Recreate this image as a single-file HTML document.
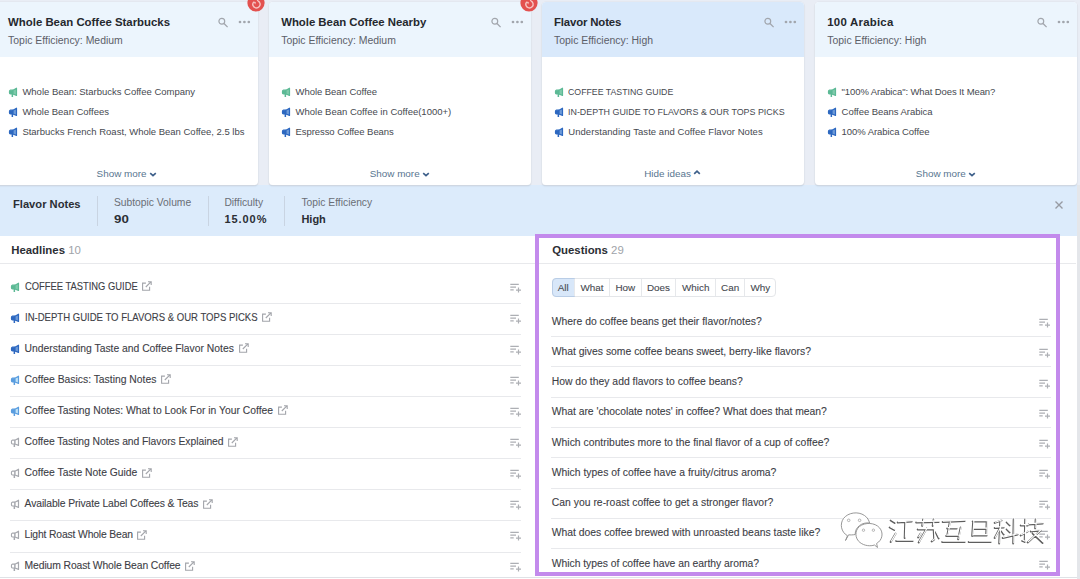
<!DOCTYPE html>
<html><head><meta charset="utf-8">
<style>
*{margin:0;padding:0;box-sizing:border-box}
html,body{width:1080px;height:579px;overflow:hidden;background:#fff;font-family:"Liberation Sans",sans-serif;color:#333}
.abs{position:absolute}
.t{position:absolute;line-height:1;white-space:nowrap}
#top{position:absolute;left:0;top:0;width:1080px;height:236px;background:#e9edf5}
.card{position:absolute;top:2.2px;width:262px;height:182.8px;background:#fff;border-radius:4px;box-shadow:0 0 0 0.6px #dfe4ec,0 1px 1.5px rgba(0,0,0,.17);overflow:hidden}
.card .hd{position:absolute;left:0;top:0;width:100%;height:54.8px;background:#ecf5fd}
.card.sel .hd{background:#d9e9fb}
.ttl{font-weight:bold;color:#25282e}
.sub{color:#5c6069}
.itm{color:#46494f}
.more{color:#58758f}
#bar{position:absolute;left:0;top:185px;width:1077px;height:51px;background:#dcebfb}
.lbl{color:#6a6e76}
.val{font-weight:bold;color:#2b2e34}
.hl{color:#3d4046;-webkit-text-stroke:0.1px #3d4046}
.sep{position:absolute;height:1px;background:#e8e9ec}
</style></head><body>
<div id="top"></div>
<div id="bar"></div>
<div class="abs" style="left:1076.7px;top:185px;width:3.3px;height:394px;background:#e4e6ea"></div>
<div class="card" style="left:-4.4px"><div class="hd"></div></div>
<div class="card" style="left:268.7px"><div class="hd"></div></div>
<div class="card sel" style="left:541.5px"><div class="hd"></div></div>
<div class="card" style="left:814.8px"><div class="hd"></div></div>
<div class="t ttl" style="left:8.10px;top:16.55px;font-size:11.4px;letter-spacing:-0.005px;">Whole Bean Coffee Starbucks</div>
<div class="t sub" style="left:8.10px;top:35.95px;font-size:10.45px;">Topic Efficiency: Medium</div>
<svg class="abs" style="left:217.10px;top:15.60px" width="12" height="12" viewBox="0 0 12 12"><circle cx="4.8" cy="5.3" r="2.9" fill="none" stroke="#a2a6ad" stroke-width="1.2"/><path d="M7 7.5 L10.6 11.1" stroke="#a2a6ad" stroke-width="1.3"/></svg>
<svg class="abs" style="left:237.60px;top:20.10px" width="13" height="4" viewBox="0 0 13 4"><circle cx="2" cy="2" r="1.35" fill="#a2a6ad"/><circle cx="6.4" cy="2" r="1.35" fill="#a2a6ad"/><circle cx="10.8" cy="2" r="1.35" fill="#a2a6ad"/></svg>
<svg class="abs" style="left:8.20px;top:87.40px" width="10" height="11" viewBox="0 0 10 11"><path d="M2.4 3.2 H5.0 V7.0 H2.4 Q1.4 7.0 1.4 5.1 Q1.4 3.2 2.4 3.2 Z" fill="#5cb995" stroke="#5cb995" stroke-width="1.2" stroke-linejoin="round"/><path d="M5.0 3.2 L8.5 1.2 V8.4 L5.0 7.0 Z" fill="#7fcaab" stroke="#5cb995" stroke-width="1.2" stroke-linejoin="round"/><rect x="3.6" y="7.0" width="1.5" height="3.0" fill="#5cb995"/></svg>
<div class="t itm" style="left:22.40px;top:87.46px;font-size:9.5px;letter-spacing:-0.012px;">Whole Bean: Starbucks Coffee Company</div>
<svg class="abs" style="left:8.20px;top:107.40px" width="10" height="11" viewBox="0 0 10 11"><path d="M2.4 3.2 H5.0 V7.0 H2.4 Q1.4 7.0 1.4 5.1 Q1.4 3.2 2.4 3.2 Z" fill="#2d68c0" stroke="#2d68c0" stroke-width="1.2" stroke-linejoin="round"/><path d="M5.0 3.2 L8.5 1.2 V8.4 L5.0 7.0 Z" fill="#6e9bd8" stroke="#2d68c0" stroke-width="1.2" stroke-linejoin="round"/><rect x="3.6" y="7.0" width="1.5" height="3.0" fill="#2d68c0"/></svg>
<div class="t itm" style="left:22.40px;top:107.46px;font-size:9.5px;letter-spacing:-0.026px;">Whole Bean Coffees</div>
<svg class="abs" style="left:8.20px;top:127.40px" width="10" height="11" viewBox="0 0 10 11"><path d="M2.4 3.2 H5.0 V7.0 H2.4 Q1.4 7.0 1.4 5.1 Q1.4 3.2 2.4 3.2 Z" fill="#2d68c0" stroke="#2d68c0" stroke-width="1.2" stroke-linejoin="round"/><path d="M5.0 3.2 L8.5 1.2 V8.4 L5.0 7.0 Z" fill="#6e9bd8" stroke="#2d68c0" stroke-width="1.2" stroke-linejoin="round"/><rect x="3.6" y="7.0" width="1.5" height="3.0" fill="#2d68c0"/></svg>
<div class="t itm" style="left:22.40px;top:127.46px;font-size:9.5px;letter-spacing:-0.013px;">Starbucks French Roast, Whole Bean Coffee, 2.5 lbs</div>
<div class="t more" style="left:46.599999999999994px;width:160px;text-align:center;top:169.42px;font-size:9.9px">Show more<svg width="8" height="5" viewBox="0 0 8 5" style="margin-left:2px;vertical-align:0.6px"><path d="M1.2 1.2 L4 3.6 L6.8 1.2" fill="none" stroke="#3d5f8a" stroke-width="1.7"/></svg></div>
<svg class="abs" style="left:247.00px;top:-5.80px" width="18" height="18" viewBox="0 0 18 18"><circle cx="9" cy="9" r="8.6" fill="#e3514f"/><g transform="translate(0.7 1.4)"><path d="M10.2 5.6 C12.6 6.4 13.2 9.6 11.4 11.4 C9.6 13.2 6.4 12.8 5.4 10.4 C4.8 9 5.2 7.4 6.2 6.6" fill="none" stroke="#f6c4c2" stroke-width="1.4"/><path d="M5.6 6.2 L8.2 6.6 L7.6 9.2 Z" fill="#f6c4c2"/><path d="M9.2 1 C10.4 2.4 10.4 4 9.6 5.6" fill="none" stroke="#f6c4c2" stroke-width="1.2"/></g></svg>
<div class="t ttl" style="left:281.20px;top:16.55px;font-size:11.4px;letter-spacing:-0.024px;">Whole Bean Coffee Nearby</div>
<div class="t sub" style="left:281.20px;top:35.95px;font-size:10.45px;">Topic Efficiency: Medium</div>
<svg class="abs" style="left:490.20px;top:15.60px" width="12" height="12" viewBox="0 0 12 12"><circle cx="4.8" cy="5.3" r="2.9" fill="none" stroke="#a2a6ad" stroke-width="1.2"/><path d="M7 7.5 L10.6 11.1" stroke="#a2a6ad" stroke-width="1.3"/></svg>
<svg class="abs" style="left:510.70px;top:20.10px" width="13" height="4" viewBox="0 0 13 4"><circle cx="2" cy="2" r="1.35" fill="#a2a6ad"/><circle cx="6.4" cy="2" r="1.35" fill="#a2a6ad"/><circle cx="10.8" cy="2" r="1.35" fill="#a2a6ad"/></svg>
<svg class="abs" style="left:281.30px;top:87.40px" width="10" height="11" viewBox="0 0 10 11"><path d="M2.4 3.2 H5.0 V7.0 H2.4 Q1.4 7.0 1.4 5.1 Q1.4 3.2 2.4 3.2 Z" fill="#5cb995" stroke="#5cb995" stroke-width="1.2" stroke-linejoin="round"/><path d="M5.0 3.2 L8.5 1.2 V8.4 L5.0 7.0 Z" fill="#7fcaab" stroke="#5cb995" stroke-width="1.2" stroke-linejoin="round"/><rect x="3.6" y="7.0" width="1.5" height="3.0" fill="#5cb995"/></svg>
<div class="t itm" style="left:295.50px;top:87.46px;font-size:9.5px;letter-spacing:-0.042px;">Whole Bean Coffee</div>
<svg class="abs" style="left:281.30px;top:107.40px" width="10" height="11" viewBox="0 0 10 11"><path d="M2.4 3.2 H5.0 V7.0 H2.4 Q1.4 7.0 1.4 5.1 Q1.4 3.2 2.4 3.2 Z" fill="#2d68c0" stroke="#2d68c0" stroke-width="1.2" stroke-linejoin="round"/><path d="M5.0 3.2 L8.5 1.2 V8.4 L5.0 7.0 Z" fill="#6e9bd8" stroke="#2d68c0" stroke-width="1.2" stroke-linejoin="round"/><rect x="3.6" y="7.0" width="1.5" height="3.0" fill="#2d68c0"/></svg>
<div class="t itm" style="left:295.50px;top:107.46px;font-size:9.5px;letter-spacing:-0.000px;">Whole Bean Coffee in Coffee(1000+)</div>
<svg class="abs" style="left:281.30px;top:127.40px" width="10" height="11" viewBox="0 0 10 11"><path d="M2.4 3.2 H5.0 V7.0 H2.4 Q1.4 7.0 1.4 5.1 Q1.4 3.2 2.4 3.2 Z" fill="#2d68c0" stroke="#2d68c0" stroke-width="1.2" stroke-linejoin="round"/><path d="M5.0 3.2 L8.5 1.2 V8.4 L5.0 7.0 Z" fill="#6e9bd8" stroke="#2d68c0" stroke-width="1.2" stroke-linejoin="round"/><rect x="3.6" y="7.0" width="1.5" height="3.0" fill="#2d68c0"/></svg>
<div class="t itm" style="left:295.50px;top:127.46px;font-size:9.5px;letter-spacing:-0.068px;">Espresso Coffee Beans</div>
<div class="t more" style="left:319.7px;width:160px;text-align:center;top:169.42px;font-size:9.9px">Show more<svg width="8" height="5" viewBox="0 0 8 5" style="margin-left:2px;vertical-align:0.6px"><path d="M1.2 1.2 L4 3.6 L6.8 1.2" fill="none" stroke="#3d5f8a" stroke-width="1.7"/></svg></div>
<svg class="abs" style="left:520.10px;top:-5.80px" width="18" height="18" viewBox="0 0 18 18"><circle cx="9" cy="9" r="8.6" fill="#e3514f"/><g transform="translate(0.7 1.4)"><path d="M10.2 5.6 C12.6 6.4 13.2 9.6 11.4 11.4 C9.6 13.2 6.4 12.8 5.4 10.4 C4.8 9 5.2 7.4 6.2 6.6" fill="none" stroke="#f6c4c2" stroke-width="1.4"/><path d="M5.6 6.2 L8.2 6.6 L7.6 9.2 Z" fill="#f6c4c2"/><path d="M9.2 1 C10.4 2.4 10.4 4 9.6 5.6" fill="none" stroke="#f6c4c2" stroke-width="1.2"/></g></svg>
<div class="t ttl" style="left:554.00px;top:16.55px;font-size:11.4px;letter-spacing:-0.150px;">Flavor Notes</div>
<div class="t sub" style="left:554.00px;top:35.95px;font-size:10.45px;">Topic Efficiency: High</div>
<svg class="abs" style="left:763.00px;top:15.60px" width="12" height="12" viewBox="0 0 12 12"><circle cx="4.8" cy="5.3" r="2.9" fill="none" stroke="#a2a6ad" stroke-width="1.2"/><path d="M7 7.5 L10.6 11.1" stroke="#a2a6ad" stroke-width="1.3"/></svg>
<svg class="abs" style="left:783.50px;top:20.10px" width="13" height="4" viewBox="0 0 13 4"><circle cx="2" cy="2" r="1.35" fill="#a2a6ad"/><circle cx="6.4" cy="2" r="1.35" fill="#a2a6ad"/><circle cx="10.8" cy="2" r="1.35" fill="#a2a6ad"/></svg>
<svg class="abs" style="left:554.10px;top:87.40px" width="10" height="11" viewBox="0 0 10 11"><path d="M2.4 3.2 H5.0 V7.0 H2.4 Q1.4 7.0 1.4 5.1 Q1.4 3.2 2.4 3.2 Z" fill="#5cb995" stroke="#5cb995" stroke-width="1.2" stroke-linejoin="round"/><path d="M5.0 3.2 L8.5 1.2 V8.4 L5.0 7.0 Z" fill="#7fcaab" stroke="#5cb995" stroke-width="1.2" stroke-linejoin="round"/><rect x="3.6" y="7.0" width="1.5" height="3.0" fill="#5cb995"/></svg>
<div class="t itm" style="left:568.30px;top:87.46px;font-size:9.5px;transform:scaleX(0.9217);transform-origin:0 0;">COFFEE TASTING GUIDE</div>
<svg class="abs" style="left:554.10px;top:107.40px" width="10" height="11" viewBox="0 0 10 11"><path d="M2.4 3.2 H5.0 V7.0 H2.4 Q1.4 7.0 1.4 5.1 Q1.4 3.2 2.4 3.2 Z" fill="#2d68c0" stroke="#2d68c0" stroke-width="1.2" stroke-linejoin="round"/><path d="M5.0 3.2 L8.5 1.2 V8.4 L5.0 7.0 Z" fill="#6e9bd8" stroke="#2d68c0" stroke-width="1.2" stroke-linejoin="round"/><rect x="3.6" y="7.0" width="1.5" height="3.0" fill="#2d68c0"/></svg>
<div class="t itm" style="left:568.30px;top:107.46px;font-size:9.5px;transform:scaleX(0.9360);transform-origin:0 0;">IN-DEPTH GUIDE TO FLAVORS &amp; OUR TOPS PICKS</div>
<svg class="abs" style="left:554.10px;top:127.40px" width="10" height="11" viewBox="0 0 10 11"><path d="M2.4 3.2 H5.0 V7.0 H2.4 Q1.4 7.0 1.4 5.1 Q1.4 3.2 2.4 3.2 Z" fill="#2d68c0" stroke="#2d68c0" stroke-width="1.2" stroke-linejoin="round"/><path d="M5.0 3.2 L8.5 1.2 V8.4 L5.0 7.0 Z" fill="#6e9bd8" stroke="#2d68c0" stroke-width="1.2" stroke-linejoin="round"/><rect x="3.6" y="7.0" width="1.5" height="3.0" fill="#2d68c0"/></svg>
<div class="t itm" style="left:568.30px;top:127.46px;font-size:9.5px;letter-spacing:0.047px;">Understanding Taste and Coffee Flavor Notes</div>
<div class="t more" style="left:592.5px;width:160px;text-align:center;top:169.42px;font-size:9.9px">Hide ideas<svg width="8" height="5" viewBox="0 0 8 5" style="margin-left:2px;vertical-align:2px"><path d="M1.2 3.8 L4 1.2 L6.8 3.8" fill="none" stroke="#3d5f8a" stroke-width="1.7"/></svg></div>
<div class="t ttl" style="left:827.30px;top:16.55px;font-size:11.4px;letter-spacing:0.240px;">100 Arabica</div>
<div class="t sub" style="left:827.30px;top:35.95px;font-size:10.45px;">Topic Efficiency: High</div>
<svg class="abs" style="left:1036.30px;top:15.60px" width="12" height="12" viewBox="0 0 12 12"><circle cx="4.8" cy="5.3" r="2.9" fill="none" stroke="#a2a6ad" stroke-width="1.2"/><path d="M7 7.5 L10.6 11.1" stroke="#a2a6ad" stroke-width="1.3"/></svg>
<svg class="abs" style="left:1056.80px;top:20.10px" width="13" height="4" viewBox="0 0 13 4"><circle cx="2" cy="2" r="1.35" fill="#a2a6ad"/><circle cx="6.4" cy="2" r="1.35" fill="#a2a6ad"/><circle cx="10.8" cy="2" r="1.35" fill="#a2a6ad"/></svg>
<svg class="abs" style="left:827.40px;top:87.40px" width="10" height="11" viewBox="0 0 10 11"><path d="M2.4 3.2 H5.0 V7.0 H2.4 Q1.4 7.0 1.4 5.1 Q1.4 3.2 2.4 3.2 Z" fill="#5cb995" stroke="#5cb995" stroke-width="1.2" stroke-linejoin="round"/><path d="M5.0 3.2 L8.5 1.2 V8.4 L5.0 7.0 Z" fill="#7fcaab" stroke="#5cb995" stroke-width="1.2" stroke-linejoin="round"/><rect x="3.6" y="7.0" width="1.5" height="3.0" fill="#5cb995"/></svg>
<div class="t itm" style="left:841.60px;top:87.46px;font-size:9.5px;letter-spacing:-0.108px;">&quot;100% Arabica&quot;: What Does It Mean?</div>
<svg class="abs" style="left:827.40px;top:107.40px" width="10" height="11" viewBox="0 0 10 11"><path d="M2.4 3.2 H5.0 V7.0 H2.4 Q1.4 7.0 1.4 5.1 Q1.4 3.2 2.4 3.2 Z" fill="#2d68c0" stroke="#2d68c0" stroke-width="1.2" stroke-linejoin="round"/><path d="M5.0 3.2 L8.5 1.2 V8.4 L5.0 7.0 Z" fill="#6e9bd8" stroke="#2d68c0" stroke-width="1.2" stroke-linejoin="round"/><rect x="3.6" y="7.0" width="1.5" height="3.0" fill="#2d68c0"/></svg>
<div class="t itm" style="left:841.60px;top:107.46px;font-size:9.5px;letter-spacing:-0.042px;">Coffee Beans Arabica</div>
<svg class="abs" style="left:827.40px;top:127.40px" width="10" height="11" viewBox="0 0 10 11"><path d="M2.4 3.2 H5.0 V7.0 H2.4 Q1.4 7.0 1.4 5.1 Q1.4 3.2 2.4 3.2 Z" fill="#2d68c0" stroke="#2d68c0" stroke-width="1.2" stroke-linejoin="round"/><path d="M5.0 3.2 L8.5 1.2 V8.4 L5.0 7.0 Z" fill="#6e9bd8" stroke="#2d68c0" stroke-width="1.2" stroke-linejoin="round"/><rect x="3.6" y="7.0" width="1.5" height="3.0" fill="#2d68c0"/></svg>
<div class="t itm" style="left:841.60px;top:127.46px;font-size:9.5px;letter-spacing:-0.063px;">100% Arabica Coffee</div>
<div class="t more" style="left:865.8px;width:160px;text-align:center;top:169.42px;font-size:9.9px">Show more<svg width="8" height="5" viewBox="0 0 8 5" style="margin-left:2px;vertical-align:0.6px"><path d="M1.2 1.2 L4 3.6 L6.8 1.2" fill="none" stroke="#3d5f8a" stroke-width="1.7"/></svg></div>
<div class="t val" style="left:13.00px;top:199.05px;font-size:11.16px;">Flavor Notes</div>
<div class="abs" style="left:97px;top:196px;width:1px;height:30px;background:#c9d4e2"></div>
<div class="t lbl" style="left:113.90px;top:198.28px;font-size:10.3px;">Subtopic Volume</div>
<div class="t val" style="left:113.90px;top:213.48px;font-size:11.6px;transform:scaleX(1.1477);transform-origin:0 0;">90</div>
<div class="abs" style="left:207.5px;top:196px;width:1px;height:30px;background:#c9d4e2"></div>
<div class="t lbl" style="left:224.40px;top:198.28px;font-size:10.3px;">Difficulty</div>
<div class="t val" style="left:224.40px;top:213.99px;font-size:11px;letter-spacing:0.949px;">15.00%</div>
<div class="abs" style="left:283.5px;top:196px;width:1px;height:30px;background:#c9d4e2"></div>
<div class="t lbl" style="left:301.40px;top:198.28px;font-size:10.3px;">Topic Efficiency</div>
<div class="t val" style="left:301.40px;top:213.99px;font-size:11px;">High</div>
<svg class="abs" style="left:1054px;top:199.5px" width="10" height="10" viewBox="0 0 10 10"><path d="M1.5 1.5 L8.5 8.5 M8.5 1.5 L1.5 8.5" stroke="#979ba3" stroke-width="1.4"/></svg>
<div class="t val" style="left:11.20px;top:245.35px;font-size:11.4px;">Headlines <span style="font-weight:normal;color:#a0a3a9">10</span></div>
<div class="sep" style="left:0;top:263px;width:1076px"></div>
<svg class="abs" style="left:10.20px;top:281.70px" width="10" height="11" viewBox="0 0 10 11"><path d="M2.4 3.2 H5.0 V7.0 H2.4 Q1.4 7.0 1.4 5.1 Q1.4 3.2 2.4 3.2 Z" fill="#5cb995" stroke="#5cb995" stroke-width="1.2" stroke-linejoin="round"/><path d="M5.0 3.2 L8.5 1.2 V8.4 L5.0 7.0 Z" fill="#7fcaab" stroke="#5cb995" stroke-width="1.2" stroke-linejoin="round"/><rect x="3.6" y="7.0" width="1.5" height="3.0" fill="#5cb995"/></svg>
<div class="t hl" style="left:24.60px;top:281.67px;font-size:10.2px;transform:scaleX(0.9206);transform-origin:0 0;">COFFEE TASTING GUIDE</div>
<svg class="abs" style="left:141.00px;top:281.10px" width="12" height="11" viewBox="0 0 12 11"><path d="M4.9 2.1 H1.6 V9.2 H8.6 V5.8" fill="none" stroke="#a3a5ab" stroke-width="1.1"/><path d="M4.8 6.0 L10.2 0.7 M7.0 0.7 H10.2 V3.9" fill="none" stroke="#a3a5ab" stroke-width="1.1"/></svg>
<svg class="abs" style="left:510.00px;top:282.70px" width="12" height="10" viewBox="0 0 12 10"><path d="M0.3 1.4 H8.8 M0.3 4.2 H6 M0.3 6.8 H3.7 M8.5 4.6 V9.6 M6 7.1 H11" fill="none" stroke="#adafb4" stroke-width="1.2"/></svg>
<div class="sep" style="left:9.6px;top:302.50px;width:511.5px"></div>
<svg class="abs" style="left:10.20px;top:312.78px" width="10" height="11" viewBox="0 0 10 11"><path d="M2.4 3.2 H5.0 V7.0 H2.4 Q1.4 7.0 1.4 5.1 Q1.4 3.2 2.4 3.2 Z" fill="#2d68c0" stroke="#2d68c0" stroke-width="1.2" stroke-linejoin="round"/><path d="M5.0 3.2 L8.5 1.2 V8.4 L5.0 7.0 Z" fill="#6e9bd8" stroke="#2d68c0" stroke-width="1.2" stroke-linejoin="round"/><rect x="3.6" y="7.0" width="1.5" height="3.0" fill="#2d68c0"/></svg>
<div class="t hl" style="left:24.60px;top:312.75px;font-size:10.2px;transform:scaleX(0.9372);transform-origin:0 0;">IN-DEPTH GUIDE TO FLAVORS &amp; OUR TOPS PICKS</div>
<svg class="abs" style="left:261.00px;top:312.18px" width="12" height="11" viewBox="0 0 12 11"><path d="M4.9 2.1 H1.6 V9.2 H8.6 V5.8" fill="none" stroke="#a3a5ab" stroke-width="1.1"/><path d="M4.8 6.0 L10.2 0.7 M7.0 0.7 H10.2 V3.9" fill="none" stroke="#a3a5ab" stroke-width="1.1"/></svg>
<svg class="abs" style="left:510.00px;top:313.78px" width="12" height="10" viewBox="0 0 12 10"><path d="M0.3 1.4 H8.8 M0.3 4.2 H6 M0.3 6.8 H3.7 M8.5 4.6 V9.6 M6 7.1 H11" fill="none" stroke="#adafb4" stroke-width="1.2"/></svg>
<div class="sep" style="left:9.6px;top:333.62px;width:511.5px"></div>
<svg class="abs" style="left:10.20px;top:343.86px" width="10" height="11" viewBox="0 0 10 11"><path d="M2.4 3.2 H5.0 V7.0 H2.4 Q1.4 7.0 1.4 5.1 Q1.4 3.2 2.4 3.2 Z" fill="#2d68c0" stroke="#2d68c0" stroke-width="1.2" stroke-linejoin="round"/><path d="M5.0 3.2 L8.5 1.2 V8.4 L5.0 7.0 Z" fill="#6e9bd8" stroke="#2d68c0" stroke-width="1.2" stroke-linejoin="round"/><rect x="3.6" y="7.0" width="1.5" height="3.0" fill="#2d68c0"/></svg>
<div class="t hl" style="left:24.60px;top:343.70px;font-size:10.35px;letter-spacing:-0.006px;">Understanding Taste and Coffee Flavor Notes</div>
<svg class="abs" style="left:237.50px;top:343.26px" width="12" height="11" viewBox="0 0 12 11"><path d="M4.9 2.1 H1.6 V9.2 H8.6 V5.8" fill="none" stroke="#a3a5ab" stroke-width="1.1"/><path d="M4.8 6.0 L10.2 0.7 M7.0 0.7 H10.2 V3.9" fill="none" stroke="#a3a5ab" stroke-width="1.1"/></svg>
<svg class="abs" style="left:510.00px;top:344.86px" width="12" height="10" viewBox="0 0 12 10"><path d="M0.3 1.4 H8.8 M0.3 4.2 H6 M0.3 6.8 H3.7 M8.5 4.6 V9.6 M6 7.1 H11" fill="none" stroke="#adafb4" stroke-width="1.2"/></svg>
<div class="sep" style="left:9.6px;top:364.75px;width:511.5px"></div>
<svg class="abs" style="left:10.20px;top:374.94px" width="10" height="11" viewBox="0 0 10 11"><path d="M2.4 3.2 H5.0 V7.0 H2.4 Q1.4 7.0 1.4 5.1 Q1.4 3.2 2.4 3.2 Z" fill="#5a9ddf" stroke="#5a9ddf" stroke-width="1.2" stroke-linejoin="round"/><path d="M5.0 3.2 L8.5 1.2 V8.4 L5.0 7.0 Z" fill="#bfe2f7" stroke="#5a9ddf" stroke-width="1.2" stroke-linejoin="round"/><rect x="3.6" y="7.0" width="1.5" height="3.0" fill="#5a9ddf"/></svg>
<div class="t hl" style="left:24.60px;top:374.78px;font-size:10.35px;letter-spacing:-0.005px;">Coffee Basics: Tasting Notes</div>
<svg class="abs" style="left:160.00px;top:374.34px" width="12" height="11" viewBox="0 0 12 11"><path d="M4.9 2.1 H1.6 V9.2 H8.6 V5.8" fill="none" stroke="#a3a5ab" stroke-width="1.1"/><path d="M4.8 6.0 L10.2 0.7 M7.0 0.7 H10.2 V3.9" fill="none" stroke="#a3a5ab" stroke-width="1.1"/></svg>
<svg class="abs" style="left:510.00px;top:375.94px" width="12" height="10" viewBox="0 0 12 10"><path d="M0.3 1.4 H8.8 M0.3 4.2 H6 M0.3 6.8 H3.7 M8.5 4.6 V9.6 M6 7.1 H11" fill="none" stroke="#adafb4" stroke-width="1.2"/></svg>
<div class="sep" style="left:9.6px;top:395.88px;width:511.5px"></div>
<svg class="abs" style="left:10.20px;top:406.02px" width="10" height="11" viewBox="0 0 10 11"><path d="M2.4 3.2 H5.0 V7.0 H2.4 Q1.4 7.0 1.4 5.1 Q1.4 3.2 2.4 3.2 Z" fill="#5a9ddf" stroke="#5a9ddf" stroke-width="1.2" stroke-linejoin="round"/><path d="M5.0 3.2 L8.5 1.2 V8.4 L5.0 7.0 Z" fill="#bfe2f7" stroke="#5a9ddf" stroke-width="1.2" stroke-linejoin="round"/><rect x="3.6" y="7.0" width="1.5" height="3.0" fill="#5a9ddf"/></svg>
<div class="t hl" style="left:24.60px;top:405.86px;font-size:10.35px;letter-spacing:0.002px;">Coffee Tasting Notes: What to Look For in Your Coffee</div>
<svg class="abs" style="left:277.00px;top:405.42px" width="12" height="11" viewBox="0 0 12 11"><path d="M4.9 2.1 H1.6 V9.2 H8.6 V5.8" fill="none" stroke="#a3a5ab" stroke-width="1.1"/><path d="M4.8 6.0 L10.2 0.7 M7.0 0.7 H10.2 V3.9" fill="none" stroke="#a3a5ab" stroke-width="1.1"/></svg>
<svg class="abs" style="left:510.00px;top:407.02px" width="12" height="10" viewBox="0 0 12 10"><path d="M0.3 1.4 H8.8 M0.3 4.2 H6 M0.3 6.8 H3.7 M8.5 4.6 V9.6 M6 7.1 H11" fill="none" stroke="#adafb4" stroke-width="1.2"/></svg>
<div class="sep" style="left:9.6px;top:427.00px;width:511.5px"></div>
<svg class="abs" style="left:10.20px;top:437.10px" width="10" height="11" viewBox="0 0 10 11"><path d="M2.4 3.2 H5.0 V7.0 H2.4 Q1.4 7.0 1.4 5.1 Q1.4 3.2 2.4 3.2 Z" fill="#ffffff" stroke="#a6a8ae" stroke-width="1.2" stroke-linejoin="round"/><path d="M5.0 3.2 L8.5 1.2 V8.4 L5.0 7.0 Z" fill="#ffffff" stroke="#a6a8ae" stroke-width="1.2" stroke-linejoin="round"/><rect x="3.6" y="7.0" width="1.5" height="3.0" fill="#a6a8ae"/></svg>
<div class="t hl" style="left:24.60px;top:436.94px;font-size:10.35px;letter-spacing:-0.046px;">Coffee Tasting Notes and Flavors Explained</div>
<svg class="abs" style="left:227.20px;top:436.50px" width="12" height="11" viewBox="0 0 12 11"><path d="M4.9 2.1 H1.6 V9.2 H8.6 V5.8" fill="none" stroke="#a3a5ab" stroke-width="1.1"/><path d="M4.8 6.0 L10.2 0.7 M7.0 0.7 H10.2 V3.9" fill="none" stroke="#a3a5ab" stroke-width="1.1"/></svg>
<svg class="abs" style="left:510.00px;top:438.10px" width="12" height="10" viewBox="0 0 12 10"><path d="M0.3 1.4 H8.8 M0.3 4.2 H6 M0.3 6.8 H3.7 M8.5 4.6 V9.6 M6 7.1 H11" fill="none" stroke="#adafb4" stroke-width="1.2"/></svg>
<div class="sep" style="left:9.6px;top:458.12px;width:511.5px"></div>
<svg class="abs" style="left:10.20px;top:468.18px" width="10" height="11" viewBox="0 0 10 11"><path d="M2.4 3.2 H5.0 V7.0 H2.4 Q1.4 7.0 1.4 5.1 Q1.4 3.2 2.4 3.2 Z" fill="#ffffff" stroke="#a6a8ae" stroke-width="1.2" stroke-linejoin="round"/><path d="M5.0 3.2 L8.5 1.2 V8.4 L5.0 7.0 Z" fill="#ffffff" stroke="#a6a8ae" stroke-width="1.2" stroke-linejoin="round"/><rect x="3.6" y="7.0" width="1.5" height="3.0" fill="#a6a8ae"/></svg>
<div class="t hl" style="left:24.60px;top:468.02px;font-size:10.35px;letter-spacing:-0.008px;">Coffee Taste Note Guide</div>
<svg class="abs" style="left:141.00px;top:467.58px" width="12" height="11" viewBox="0 0 12 11"><path d="M4.9 2.1 H1.6 V9.2 H8.6 V5.8" fill="none" stroke="#a3a5ab" stroke-width="1.1"/><path d="M4.8 6.0 L10.2 0.7 M7.0 0.7 H10.2 V3.9" fill="none" stroke="#a3a5ab" stroke-width="1.1"/></svg>
<svg class="abs" style="left:510.00px;top:469.18px" width="12" height="10" viewBox="0 0 12 10"><path d="M0.3 1.4 H8.8 M0.3 4.2 H6 M0.3 6.8 H3.7 M8.5 4.6 V9.6 M6 7.1 H11" fill="none" stroke="#adafb4" stroke-width="1.2"/></svg>
<div class="sep" style="left:9.6px;top:489.25px;width:511.5px"></div>
<svg class="abs" style="left:10.20px;top:499.26px" width="10" height="11" viewBox="0 0 10 11"><path d="M2.4 3.2 H5.0 V7.0 H2.4 Q1.4 7.0 1.4 5.1 Q1.4 3.2 2.4 3.2 Z" fill="#ffffff" stroke="#a6a8ae" stroke-width="1.2" stroke-linejoin="round"/><path d="M5.0 3.2 L8.5 1.2 V8.4 L5.0 7.0 Z" fill="#ffffff" stroke="#a6a8ae" stroke-width="1.2" stroke-linejoin="round"/><rect x="3.6" y="7.0" width="1.5" height="3.0" fill="#a6a8ae"/></svg>
<div class="t hl" style="left:24.60px;top:499.10px;font-size:10.35px;letter-spacing:-0.104px;">Available Private Label Coffees &amp; Teas</div>
<svg class="abs" style="left:202.00px;top:498.66px" width="12" height="11" viewBox="0 0 12 11"><path d="M4.9 2.1 H1.6 V9.2 H8.6 V5.8" fill="none" stroke="#a3a5ab" stroke-width="1.1"/><path d="M4.8 6.0 L10.2 0.7 M7.0 0.7 H10.2 V3.9" fill="none" stroke="#a3a5ab" stroke-width="1.1"/></svg>
<svg class="abs" style="left:510.00px;top:500.26px" width="12" height="10" viewBox="0 0 12 10"><path d="M0.3 1.4 H8.8 M0.3 4.2 H6 M0.3 6.8 H3.7 M8.5 4.6 V9.6 M6 7.1 H11" fill="none" stroke="#adafb4" stroke-width="1.2"/></svg>
<div class="sep" style="left:9.6px;top:520.38px;width:511.5px"></div>
<svg class="abs" style="left:10.20px;top:530.34px" width="10" height="11" viewBox="0 0 10 11"><path d="M2.4 3.2 H5.0 V7.0 H2.4 Q1.4 7.0 1.4 5.1 Q1.4 3.2 2.4 3.2 Z" fill="#ffffff" stroke="#a6a8ae" stroke-width="1.2" stroke-linejoin="round"/><path d="M5.0 3.2 L8.5 1.2 V8.4 L5.0 7.0 Z" fill="#ffffff" stroke="#a6a8ae" stroke-width="1.2" stroke-linejoin="round"/><rect x="3.6" y="7.0" width="1.5" height="3.0" fill="#a6a8ae"/></svg>
<div class="t hl" style="left:24.60px;top:530.18px;font-size:10.35px;letter-spacing:-0.148px;">Light Roast Whole Bean</div>
<svg class="abs" style="left:136.40px;top:529.74px" width="12" height="11" viewBox="0 0 12 11"><path d="M4.9 2.1 H1.6 V9.2 H8.6 V5.8" fill="none" stroke="#a3a5ab" stroke-width="1.1"/><path d="M4.8 6.0 L10.2 0.7 M7.0 0.7 H10.2 V3.9" fill="none" stroke="#a3a5ab" stroke-width="1.1"/></svg>
<svg class="abs" style="left:510.00px;top:531.34px" width="12" height="10" viewBox="0 0 12 10"><path d="M0.3 1.4 H8.8 M0.3 4.2 H6 M0.3 6.8 H3.7 M8.5 4.6 V9.6 M6 7.1 H11" fill="none" stroke="#adafb4" stroke-width="1.2"/></svg>
<div class="sep" style="left:9.6px;top:551.50px;width:511.5px"></div>
<svg class="abs" style="left:10.20px;top:561.42px" width="10" height="11" viewBox="0 0 10 11"><path d="M2.4 3.2 H5.0 V7.0 H2.4 Q1.4 7.0 1.4 5.1 Q1.4 3.2 2.4 3.2 Z" fill="#ffffff" stroke="#a6a8ae" stroke-width="1.2" stroke-linejoin="round"/><path d="M5.0 3.2 L8.5 1.2 V8.4 L5.0 7.0 Z" fill="#ffffff" stroke="#a6a8ae" stroke-width="1.2" stroke-linejoin="round"/><rect x="3.6" y="7.0" width="1.5" height="3.0" fill="#a6a8ae"/></svg>
<div class="t hl" style="left:24.60px;top:561.26px;font-size:10.35px;letter-spacing:-0.106px;">Medium Roast Whole Bean Coffee</div>
<svg class="abs" style="left:184.00px;top:560.82px" width="12" height="11" viewBox="0 0 12 11"><path d="M4.9 2.1 H1.6 V9.2 H8.6 V5.8" fill="none" stroke="#a3a5ab" stroke-width="1.1"/><path d="M4.8 6.0 L10.2 0.7 M7.0 0.7 H10.2 V3.9" fill="none" stroke="#a3a5ab" stroke-width="1.1"/></svg>
<svg class="abs" style="left:510.00px;top:562.42px" width="12" height="10" viewBox="0 0 12 10"><path d="M0.3 1.4 H8.8 M0.3 4.2 H6 M0.3 6.8 H3.7 M8.5 4.6 V9.6 M6 7.1 H11" fill="none" stroke="#adafb4" stroke-width="1.2"/></svg>
<div class="abs" style="left:535.2px;top:233.8px;width:524.5px;height:342px;border:4px solid #c38aec"></div>
<div class="t val" style="left:552.20px;top:245.35px;font-size:11.4px;">Questions <span style="font-weight:normal;color:#a0a3a9">29</span></div>
<div class="abs" style="left:551.7px;top:278.4px;width:224.4px;height:18.7px;border:1px solid #e4e6e9;border-radius:4px;background:#fff"></div>
<div class="abs" style="left:551.7px;top:278.4px;width:22.9px;height:18.7px;border:1px solid #b9cde6;border-radius:4px 0 0 4px;background:#d8e7f9"></div>
<div class="t" style="left:551.7px;width:22.90px;text-align:center;top:282.72px;font-size:9.9px;color:#46494f;-webkit-text-stroke:0.1px #46494f">All</div>
<div class="abs" style="left:574.10px;top:279.4px;width:1px;height:16.7px;background:#e6e8eb"></div>
<div class="t" style="left:574.6px;width:34.80px;text-align:center;top:282.72px;font-size:9.9px;color:#46494f;-webkit-text-stroke:0.1px #46494f">What</div>
<div class="abs" style="left:608.90px;top:279.4px;width:1px;height:16.7px;background:#e6e8eb"></div>
<div class="t" style="left:609.4px;width:31.80px;text-align:center;top:282.72px;font-size:9.9px;color:#46494f;-webkit-text-stroke:0.1px #46494f">How</div>
<div class="abs" style="left:640.70px;top:279.4px;width:1px;height:16.7px;background:#e6e8eb"></div>
<div class="t" style="left:641.2px;width:34.50px;text-align:center;top:282.72px;font-size:9.9px;color:#46494f;-webkit-text-stroke:0.1px #46494f">Does</div>
<div class="abs" style="left:675.20px;top:279.4px;width:1px;height:16.7px;background:#e6e8eb"></div>
<div class="t" style="left:675.7px;width:40.00px;text-align:center;top:282.72px;font-size:9.9px;color:#46494f;-webkit-text-stroke:0.1px #46494f">Which</div>
<div class="abs" style="left:715.20px;top:279.4px;width:1px;height:16.7px;background:#e6e8eb"></div>
<div class="t" style="left:715.7px;width:28.90px;text-align:center;top:282.72px;font-size:9.9px;color:#46494f;-webkit-text-stroke:0.1px #46494f">Can</div>
<div class="abs" style="left:744.10px;top:279.4px;width:1px;height:16.7px;background:#e6e8eb"></div>
<div class="t" style="left:744.6px;width:31.50px;text-align:center;top:282.72px;font-size:9.9px;color:#46494f;-webkit-text-stroke:0.1px #46494f">Why</div>
<div class="t hl" style="left:551.70px;top:316.61px;font-size:10.38px;letter-spacing:0.006px;">Where do coffee beans get their flavor/notes?</div>
<svg class="abs" style="left:1039.40px;top:318.20px" width="12" height="10" viewBox="0 0 12 10"><path d="M0.3 1.4 H8.8 M0.3 4.2 H6 M0.3 6.8 H3.7 M8.5 4.6 V9.6 M6 7.1 H11" fill="none" stroke="#adafb4" stroke-width="1.2"/></svg>
<div class="sep" style="left:551.3px;top:335.90px;width:499.5px"></div>
<div class="t hl" style="left:551.70px;top:346.86px;font-size:10.38px;letter-spacing:0.000px;">What gives some coffee beans sweet, berry-like flavors?</div>
<svg class="abs" style="left:1039.40px;top:348.45px" width="12" height="10" viewBox="0 0 12 10"><path d="M0.3 1.4 H8.8 M0.3 4.2 H6 M0.3 6.8 H3.7 M8.5 4.6 V9.6 M6 7.1 H11" fill="none" stroke="#adafb4" stroke-width="1.2"/></svg>
<div class="sep" style="left:551.3px;top:366.27px;width:499.5px"></div>
<div class="t hl" style="left:551.70px;top:377.11px;font-size:10.38px;letter-spacing:0.010px;">How do they add flavors to coffee beans?</div>
<svg class="abs" style="left:1039.40px;top:378.70px" width="12" height="10" viewBox="0 0 12 10"><path d="M0.3 1.4 H8.8 M0.3 4.2 H6 M0.3 6.8 H3.7 M8.5 4.6 V9.6 M6 7.1 H11" fill="none" stroke="#adafb4" stroke-width="1.2"/></svg>
<div class="sep" style="left:551.3px;top:396.64px;width:499.5px"></div>
<div class="t hl" style="left:551.70px;top:407.36px;font-size:10.38px;letter-spacing:-0.025px;">What are 'chocolate notes' in coffee? What does that mean?</div>
<svg class="abs" style="left:1039.40px;top:408.95px" width="12" height="10" viewBox="0 0 12 10"><path d="M0.3 1.4 H8.8 M0.3 4.2 H6 M0.3 6.8 H3.7 M8.5 4.6 V9.6 M6 7.1 H11" fill="none" stroke="#adafb4" stroke-width="1.2"/></svg>
<div class="sep" style="left:551.3px;top:427.01px;width:499.5px"></div>
<div class="t hl" style="left:551.70px;top:437.61px;font-size:10.38px;letter-spacing:0.027px;">Which contributes more to the final flavor of a cup of coffee?</div>
<svg class="abs" style="left:1039.40px;top:439.20px" width="12" height="10" viewBox="0 0 12 10"><path d="M0.3 1.4 H8.8 M0.3 4.2 H6 M0.3 6.8 H3.7 M8.5 4.6 V9.6 M6 7.1 H11" fill="none" stroke="#adafb4" stroke-width="1.2"/></svg>
<div class="sep" style="left:551.3px;top:457.38px;width:499.5px"></div>
<div class="t hl" style="left:551.70px;top:467.86px;font-size:10.38px;letter-spacing:0.012px;">Which types of coffee have a fruity/citrus aroma?</div>
<svg class="abs" style="left:1039.40px;top:469.45px" width="12" height="10" viewBox="0 0 12 10"><path d="M0.3 1.4 H8.8 M0.3 4.2 H6 M0.3 6.8 H3.7 M8.5 4.6 V9.6 M6 7.1 H11" fill="none" stroke="#adafb4" stroke-width="1.2"/></svg>
<div class="sep" style="left:551.3px;top:487.75px;width:499.5px"></div>
<div class="t hl" style="left:551.70px;top:498.11px;font-size:10.38px;letter-spacing:0.021px;">Can you re-roast coffee to get a stronger flavor?</div>
<svg class="abs" style="left:1039.40px;top:499.70px" width="12" height="10" viewBox="0 0 12 10"><path d="M0.3 1.4 H8.8 M0.3 4.2 H6 M0.3 6.8 H3.7 M8.5 4.6 V9.6 M6 7.1 H11" fill="none" stroke="#adafb4" stroke-width="1.2"/></svg>
<div class="sep" style="left:551.3px;top:518.12px;width:499.5px"></div>
<div class="t hl" style="left:551.70px;top:528.36px;font-size:10.38px;letter-spacing:-0.001px;">What does coffee brewed with unroasted beans taste like?</div>
<svg class="abs" style="left:1039.40px;top:529.95px" width="12" height="10" viewBox="0 0 12 10"><path d="M0.3 1.4 H8.8 M0.3 4.2 H6 M0.3 6.8 H3.7 M8.5 4.6 V9.6 M6 7.1 H11" fill="none" stroke="#adafb4" stroke-width="1.2"/></svg>
<div class="sep" style="left:551.3px;top:548.49px;width:499.5px"></div>
<div class="t hl" style="left:551.70px;top:558.61px;font-size:10.38px;letter-spacing:-0.027px;">Which types of coffee have an earthy aroma?</div>
<svg class="abs" style="left:1039.40px;top:560.20px" width="12" height="10" viewBox="0 0 12 10"><path d="M0.3 1.4 H8.8 M0.3 4.2 H6 M0.3 6.8 H3.7 M8.5 4.6 V9.6 M6 7.1 H11" fill="none" stroke="#adafb4" stroke-width="1.2"/></svg>
<svg class="abs" style="left:836px;top:508px" width="52" height="44" viewBox="836 508 52 44">
<path d="M845.5 540.5 L847.5 535.8 C841 532 839.6 524 843.5 518.5 C848 512.5 858 511 864.5 515.5 C867.5 517.5 869 520.5 869.6 523 C862 522 855 527 855.2 534.5 C852.5 535 850.5 535 848.6 534.8 Z" fill="#fff" stroke="#8c8c8c" stroke-width="0.9"/>
<path d="M877.5 547.5 L876.6 543.5 C882.5 540 883.8 532.8 879.5 527.8 C875 522.5 865 522 859.5 526.5 C854.5 530.5 854.8 538.5 860 542.5 C864.5 546 870.5 546.4 874.5 545 Z" fill="#fff" stroke="#8c8c8c" stroke-width="0.9"/>
<circle cx="848.7" cy="520.3" r="1.3" fill="#fff" stroke="#9a9a9a" stroke-width="0.7"/><circle cx="859.6" cy="520.3" r="1.3" fill="#fff" stroke="#9a9a9a" stroke-width="0.7"/>
<circle cx="863.5" cy="530.2" r="1.2" fill="#fff" stroke="#9a9a9a" stroke-width="0.7"/><circle cx="873.4" cy="530.2" r="1.2" fill="#fff" stroke="#9a9a9a" stroke-width="0.7"/>
</svg>
<svg class="abs" style="left:880px;top:510px" width="170" height="40" viewBox="880 510 170 40"><path d="M891 520 L895 522.5 M890 527 L894.5 529.5 M891 541.5 L896 533 M898 522 L912 521 M905.5 522 L905 537.5 M896.5 540.5 L913 540.5 M916.5 522 L939 521.5 M923.5 519 L922.5 525.5 M934 519 L933 525.5 M918 529 L934 529 M934 529 L934.5 539 M934.5 539 L932 541 M927 528 L919 542 M921 533 L918.5 537 M936 532 L939 538 M943 521.5 L965 520.5 M950 522.5 L947.5 535.5 M947.5 528 L957 528 M961 527 L958.5 539 M946.5 535.5 L958 535.5 M942.5 541.5 L965 541.5 M973.5 521 L972.5 535.5 M973 521 L987.5 521 M973 528.5 L986.5 528.5 M972.5 535 L987 535 M987 521 L986.5 535 M969 541.5 L991 541.5 M1002 520 L995 522.5 M995 527.5 L1004 527 M1000.5 522 L999.5 543 M999.5 529 L995 537.5 M1002 531 L1004 534 M1007 522 L1010 525 M1007 529 L1010 532 M1003 537.5 L1018 534 M1014 519 L1013.5 543 M1021 525 L1028 525 M1025.5 519 L1025 541.5 M1025 541.5 L1022.5 540.5 M1021 535 L1028 531 M1029 524 L1043 523 M1036 519 L1035.5 528 M1031 531 L1041 530 M1041 530 L1028 542 M1033 533 L1043 542.5" fill="none" stroke="#5e5e5e" stroke-width="1.9" stroke-linecap="round" transform="translate(-0.35 0.45)"/><path d="M891 520 L895 522.5 M890 527 L894.5 529.5 M891 541.5 L896 533 M898 522 L912 521 M905.5 522 L905 537.5 M896.5 540.5 L913 540.5 M916.5 522 L939 521.5 M923.5 519 L922.5 525.5 M934 519 L933 525.5 M918 529 L934 529 M934 529 L934.5 539 M934.5 539 L932 541 M927 528 L919 542 M921 533 L918.5 537 M936 532 L939 538 M943 521.5 L965 520.5 M950 522.5 L947.5 535.5 M947.5 528 L957 528 M961 527 L958.5 539 M946.5 535.5 L958 535.5 M942.5 541.5 L965 541.5 M973.5 521 L972.5 535.5 M973 521 L987.5 521 M973 528.5 L986.5 528.5 M972.5 535 L987 535 M987 521 L986.5 535 M969 541.5 L991 541.5 M1002 520 L995 522.5 M995 527.5 L1004 527 M1000.5 522 L999.5 543 M999.5 529 L995 537.5 M1002 531 L1004 534 M1007 522 L1010 525 M1007 529 L1010 532 M1003 537.5 L1018 534 M1014 519 L1013.5 543 M1021 525 L1028 525 M1025.5 519 L1025 541.5 M1025 541.5 L1022.5 540.5 M1021 535 L1028 531 M1029 524 L1043 523 M1036 519 L1035.5 528 M1031 531 L1041 530 M1041 530 L1028 542 M1033 533 L1043 542.5" fill="none" stroke="#fff" stroke-width="1.1" stroke-linecap="round" transform="translate(0.35 -0.35)"/></svg>
<div class="abs" style="left:0;top:576.8px;width:1077px;height:1px;background:#dfe2e6"></div>
</body></html>
